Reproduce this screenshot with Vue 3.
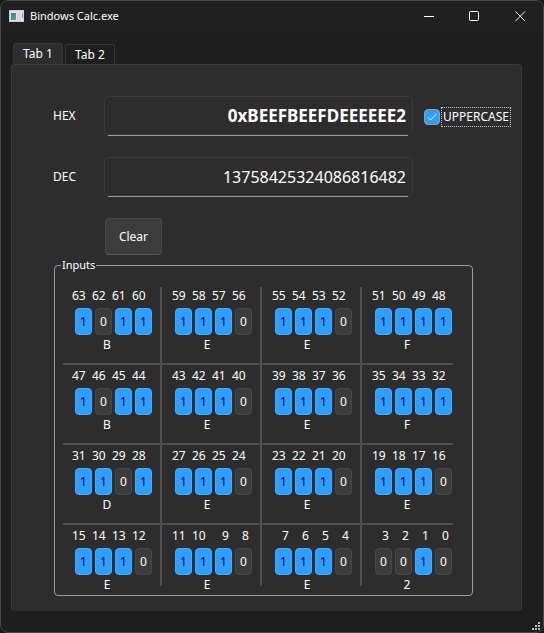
<script setup>
import { ref, computed } from 'vue'

const value = ref(0xBEEFBEEFDEEEEEE2n)
const uppercase = ref(true)

const hex = computed(() => {
  const digits = value.value.toString(16)
  return '0x' + (uppercase.value ? digits.toUpperCase() : digits)
})
const dec = computed(() => value.value.toString())

const nibbles = computed(() =>
  Array.from({ length: 16 }, (_, i) => {
    const top = 63 - i * 4
    const bits = [top, top - 1, top - 2, top - 3].map((n) => ({
      n,
      on: ((value.value >> BigInt(n)) & 1n) === 1n,
    }))
    const digit = Number((value.value >> BigInt(top - 3)) & 15n).toString(16)
    return { top, bits, digit: uppercase.value ? digit.toUpperCase() : digit }
  })
)

function toggle(n) {
  value.value ^= 1n << BigInt(n)
}
function clear() {
  value.value = 0n
}
</script>

<template>
  <div class="window">
    <header class="titlebar">
      <svg class="app-icon" width="16" height="14" viewBox="0 0 16 14" aria-hidden="true">
        <defs>
          <linearGradient id="screen" x1="0" y1="0" x2="1" y2="1">
            <stop offset="0" stop-color="#3f78a8" />
            <stop offset="1" stop-color="#5cab7c" />
          </linearGradient>
        </defs>
        <rect x="0.5" y="1.5" width="14" height="11" fill="#e4e7ea" stroke="#c9cdd1" />
        <rect x="2" y="4" width="5" height="7" fill="url(#screen)" />
        <rect x="8" y="3" width="4" height="9" fill="#d3d9de" />
        <rect x="13" y="4" width="1" height="5" fill="#8fa9a0" />
      </svg>
      <h1>Bindows Calc.exe</h1>
      <div class="window-buttons">
        <button type="button" aria-label="Minimize">
          <svg width="11" height="11" viewBox="0 0 11 11"><path d="M1 5.5H11" /></svg>
        </button>
        <button type="button" aria-label="Maximize">
          <svg width="11" height="11" viewBox="0 0 11 11"><rect x="0.5" y="0.5" width="9" height="9" rx="1" /></svg>
        </button>
        <button type="button" aria-label="Close">
          <svg width="11" height="11" viewBox="0 0 11 11"><path d="M0.5 0.5L10 10M10 0.5L0.5 10" /></svg>
        </button>
      </div>
    </header>

    <main class="content">
      <div class="tabs" role="tablist">
        <button class="tab active" type="button" role="tab" aria-selected="true">Tab 1</button>
        <button class="tab" type="button" role="tab" aria-selected="false">Tab 2</button>
      </div>

      <section class="panel">
        <div class="row">
          <label class="name" for="hex">HEX</label>
          <div class="field"><input id="hex" class="bold" type="text" :value="hex" readonly /></div>
          <label class="check">
            <input v-model="uppercase" type="checkbox" />
            <svg class="tick" width="16" height="16" viewBox="0 0 16 16" aria-hidden="true"><path d="M4 8.5L6.5 11L12.5 5" /></svg>
            <span>UPPERCASE</span>
          </label>
        </div>
        <div class="row">
          <label class="name" for="dec">DEC</label>
          <div class="field"><input id="dec" type="text" :value="dec" readonly /></div>
        </div>
        <div class="actions">
          <button class="clear" type="button" @click="clear">Clear</button>
        </div>

        <fieldset class="inputs">
          <legend>Inputs</legend>
          <div class="grid">
            <div v-for="group in nibbles" :key="group.top" class="nibble">
              <div class="bits">
                <div v-for="bit in group.bits" :key="bit.n" class="bit">
                  <span class="index" :class="{ single: bit.n < 10 }">{{ bit.n }}</span>
                  <button type="button" :class="{ on: bit.on }" :aria-pressed="bit.on" @click="toggle(bit.n)">{{ bit.on ? 1 : 0 }}</button>
                </div>
              </div>
              <output>{{ group.digit }}</output>
            </div>
          </div>
        </fieldset>
      </section>
    </main>

    <svg class="grip" width="8" height="8" viewBox="0 0 8 8" aria-hidden="true">
      <path d="M6 0h2v2h-2zM3 3h2v2h-2zM6 3h2v2h-2zM0 6h2v2h-2zM3 6h2v2h-2zM6 6h2v2h-2z" />
    </svg>
  </div>
</template>

<style>
body {
  margin: 0;
  background: #1a1a1a;
}
</style>

<style scoped>
.window {
  position: relative;
  box-sizing: border-box;
  min-height: 100vh;
  display: flex;
  flex-direction: column;
  border: 1px solid #484848;
  border-radius: 8px;
  overflow: hidden;
  background: #1e1e1e;
  color: #fff;
  font: 12px/16px "Noto Sans", "Segoe UI", sans-serif;
}
button,
input {
  font: inherit;
  color: inherit;
  margin: 0;
  padding: 0;
  box-sizing: border-box;
}
.titlebar {
  display: flex;
  align-items: center;
  height: 30px;
  padding-left: 8px;
  background: #202020;
}
h1 {
  flex: 1;
  margin: 0 0 0 5px;
  font-size: 11px;
  font-weight: 400;
}
.window-buttons {
  display: flex;
}
.window-buttons button {
  display: grid;
  place-items: center;
  width: 46px;
  height: 30px;
  border: 0;
  background: none;
}
.window-buttons svg {
  fill: none;
  stroke: #fff;
}
.content {
  flex: 1;
  display: flex;
  flex-direction: column;
  padding: 12px 21px 21px 10px;
}
.tabs {
  display: flex;
  align-items: flex-end;
  gap: 2px;
  padding-left: 2px;
}
.tab {
  width: 50px;
  height: 20px;
  border: 1px solid #353535;
  border-bottom: 0;
  border-radius: 3px 3px 0 0;
  background: #1e1e1e;
}
.tab.active {
  height: 21px;
  background: #2d2d2d;
}
.panel {
  flex: 1;
  padding: 31px 8px 14px 41px;
  border: 1px solid #3a3a3a;
  border-bottom-color: #2d2d2d;
  border-radius: 4px;
  background: #2d2d2d;
}
.row {
  display: flex;
  align-items: center;
  margin-bottom: 21px;
}
.name {
  flex: none;
  width: 51px;
}
.field {
  position: relative;
  flex: 0 1 309px;
  height: 40px;
}
.field::after {
  content: "";
  position: absolute;
  left: 4px;
  right: 5px;
  bottom: 0;
  height: 1px;
  background: #9a9a9a;
}
.field input {
  display: block;
  width: 100%;
  height: 39px;
  padding: 0 6px;
  border: 1px solid #3a3a3a;
  border-radius: 4px;
  outline: 0;
  background: #2d2d2d;
  font-size: 16px;
  text-align: right;
}
.field .bold {
  font-size: 17px;
  font-weight: 700;
}
.check {
  position: relative;
  display: flex;
  align-items: center;
  gap: 1px;
  margin: 2px 0 0 11px;
}
.check input {
  appearance: none;
  width: 16px;
  height: 16px;
  border: 1px solid #9a9a9a;
  border-radius: 4px;
}
.check input:checked {
  background: #2f9fff;
}
.tick {
  position: absolute;
  left: 0;
  fill: none;
  stroke: #e8f4ff;
  visibility: hidden;
}
.check input:checked + .tick {
  visibility: visible;
}
.check span {
  padding: 1px;
  border: 1px dotted #c8c8c8;
}
.actions {
  padding-left: 52px;
}
.clear {
  display: block;
  width: 57px;
  height: 37px;
  padding-top: 1px;
  border: 1px solid #484848;
  border-bottom-color: #585858;
  border-radius: 4px;
  background: #3c3c3c;
}
.inputs {
  width: 419px;
  box-sizing: border-box;
  margin: 2px 0 0 1px;
  padding: 14px 19px 9px 8px;
  border: 1px solid #9a9a9a;
  border-radius: 4px;
}
.inputs legend {
  margin-left: -2px;
  padding: 0 1px;
  font-size: 11px;
}
.grid {
  display: grid;
  grid-template-columns: 99px repeat(2, 100px) 91px;
  grid-template-rows: 78px 80px 80px 61px;
}
.nibble {
  padding: 3px 0 0 10px;
  border-right: 2px solid #505050;
  border-bottom: 2px solid #505050;
}
.nibble:nth-child(-n + 4) {
  padding-top: 1px;
}
.nibble:nth-child(4n + 1) {
  padding-left: 9px;
}
.nibble:nth-child(4n) {
  border-right: 0;
}
.nibble:nth-child(n + 13) {
  border-bottom: 0;
}
.bits {
  display: flex;
}
.bit {
  width: 20px;
}
.index {
  display: block;
  height: 20px;
}
.index.single {
  padding-left: 10px;
}
.bit button {
  display: block;
  width: 17px;
  height: 27px;
  margin-left: 3px;
  border: 1px solid #484848;
  border-radius: 4px;
  background: #3c3c3c;
}
.bit .on {
  border-color: #44aaff;
  background: #2f9fff;
  color: #000050;
}
output {
  display: block;
  width: 70px;
  padding-top: 2px;
  text-align: center;
}
.grip {
  position: absolute;
  right: 3px;
  bottom: 2px;
  fill: #bdbdbd;
}
</style>
